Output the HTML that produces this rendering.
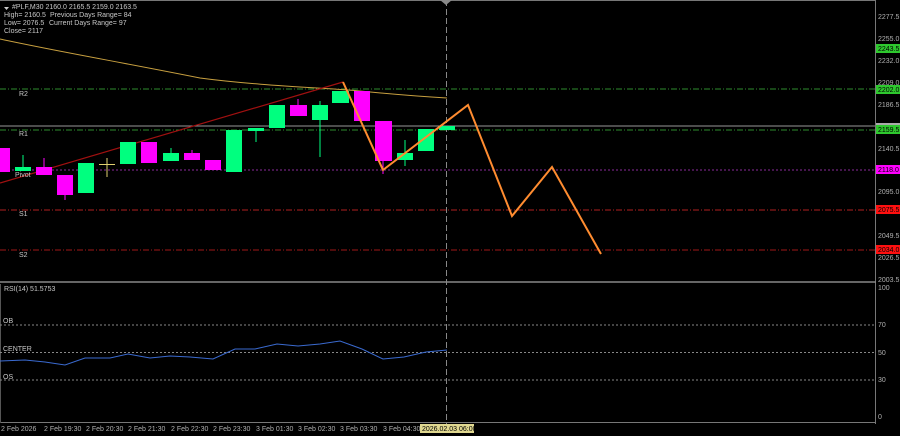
<!DOCTYPE html>
<html><head><style>
body{margin:0;background:#000;width:900px;height:436px;overflow:hidden}
svg{display:block}
text{font-family:"Liberation Sans",sans-serif;font-size:7px;fill:#c8c8c8}
.ax{fill:#b0b0b0}
</style></head><body>
<svg width="900" height="436" viewBox="0 0 900 436">
<rect width="900" height="436" fill="#000"/>
<line x1="0" y1="0.5" x2="876" y2="0.5" stroke="#777"/>
<line x1="875.5" y1="0" x2="875.5" y2="424" stroke="#777"/>
<line x1="0" y1="282" x2="876" y2="282" stroke="#888" stroke-width="1.5"/>
<line x1="0" y1="422.5" x2="876" y2="422.5" stroke="#777"/>
<line x1="0.5" y1="284" x2="0.5" y2="423" stroke="#555"/>
<line x1="0" y1="89" x2="875" y2="89" stroke="#2e8b2e" stroke-dasharray="6,2,1,2"/>
<line x1="0" y1="126" x2="875" y2="126" stroke="#999"/>
<line x1="0" y1="130" x2="875" y2="130" stroke="#2e8b2e" stroke-dasharray="6,2,1,2"/>
<line x1="0" y1="170" x2="875" y2="170" stroke="#8a2a9a" stroke-dasharray="2,2"/>
<line x1="0" y1="210" x2="875" y2="210" stroke="#b02020" stroke-dasharray="6,2,1,2"/>
<line x1="0" y1="250" x2="875" y2="250" stroke="#a01818" stroke-dasharray="6,2,1,2"/>
<line x1="446.5" y1="0" x2="446.5" y2="424" stroke="#888" stroke-dasharray="6,3"/>
<path d="M0,39 C60,52 120,62 200,78 C260,86 330,88 360,91 C400,95 430,97 447,98" stroke="#c8a040" fill="none"/>
<line x1="0" y1="183" x2="343" y2="82" stroke="#a01010" stroke-width="1.2"/>
<g stroke-width="1">
<rect x="0" y="148" width="10" height="24" fill="#ff00ff"/>
<line x1="23" y1="155" x2="23" y2="171" stroke="#00ff7f"/><rect x="15" y="167" width="16" height="4" fill="#00ff7f"/>
<line x1="44" y1="158" x2="44" y2="175" stroke="#ff00ff"/><rect x="36" y="167" width="16" height="8" fill="#ff00ff"/>
<line x1="65" y1="175" x2="65" y2="200" stroke="#ff00ff"/><rect x="57" y="175" width="16" height="20" fill="#ff00ff"/>
<rect x="78" y="163" width="16" height="30" fill="#00ff7f"/>
<line x1="99" y1="164.5" x2="115" y2="164.5" stroke="#e0d070"/><line x1="107" y1="158" x2="107" y2="177" stroke="#e0d070"/>
<rect x="120" y="142" width="16" height="22" fill="#00ff7f"/>
<rect x="141" y="142" width="16" height="21" fill="#ff00ff"/>
<line x1="171" y1="148" x2="171" y2="161" stroke="#00ff7f"/><rect x="163" y="153" width="16" height="8" fill="#00ff7f"/>
<line x1="192" y1="150" x2="192" y2="160" stroke="#ff00ff"/><rect x="184" y="153" width="16" height="7" fill="#ff00ff"/>
<rect x="205" y="160" width="16" height="10" fill="#ff00ff"/>
<rect x="226" y="130" width="16" height="42" fill="#00ff7f"/>
<line x1="256" y1="128" x2="256" y2="142" stroke="#00ff7f"/><rect x="248" y="128" width="16" height="3" fill="#00ff7f"/>
<rect x="269" y="105" width="16" height="23" fill="#00ff7f"/>
<line x1="298" y1="99" x2="298" y2="115" stroke="#ff00ff"/><rect x="290" y="105" width="17" height="11" fill="#ff00ff"/>
<line x1="320" y1="101" x2="320" y2="157" stroke="#00ff7f"/><rect x="312" y="105" width="16" height="15" fill="#00ff7f"/>
<rect x="332" y="91" width="17" height="12" fill="#00ff7f"/>
<rect x="354" y="91" width="16" height="30" fill="#ff00ff"/>
<line x1="383" y1="121" x2="383" y2="174" stroke="#ff00ff"/><rect x="375" y="121" width="17" height="40" fill="#ff00ff"/>
<line x1="405" y1="140" x2="405" y2="166" stroke="#00ff7f"/><rect x="397" y="153" width="16" height="7" fill="#00ff7f"/>
<rect x="418" y="129" width="16" height="22" fill="#00ff7f"/>
<rect x="439" y="126" width="16" height="4" fill="#00ff7f"/>
</g>
<polyline points="343,82 383,170 468,105 512,216 552,167 601,254" stroke="#ff8c30" stroke-width="2" fill="none"/>
<path d="M4,7 l5,0 l-2.5,3z" fill="#ccc"/>
<text x="12" y="9">#PLF,M30  2160.0 2165.5 2159.0 2163.5</text>
<text x="4" y="17">High= 2160.5</text><text x="50" y="17">Previous Days Range= 84</text>
<text x="4" y="25">Low= 2076.5</text><text x="49" y="25">Current Days Range= 97</text>
<text x="4" y="33">Close= 2117</text>
<text x="19" y="96">R2</text><text x="19" y="136">R1</text>
<text x="15" y="177">Pivot</text><text x="19" y="216">S1</text><text x="19" y="257">S2</text>
<text class="ax" x="878" y="19">2277.5</text>
<text class="ax" x="878" y="41">2255.0</text>
<text class="ax" x="878" y="63">2232.0</text>
<text class="ax" x="878" y="85">2209.0</text>
<text class="ax" x="878" y="107">2186.5</text>
<text class="ax" x="878" y="151">2140.5</text>
<text class="ax" x="878" y="194">2095.0</text>
<text class="ax" x="878" y="238">2049.5</text>
<text class="ax" x="878" y="260">2026.5</text>
<text class="ax" x="878" y="282">2003.5</text>
<rect x="876" y="44" width="24" height="9" fill="#2ec82e"/><text x="878" y="51" style="fill:#000">2243.5</text>
<rect x="876" y="85" width="24" height="9" fill="#2ec82e"/><text x="878" y="92" style="fill:#000">2202.0</text>
<rect x="876" y="123" width="24" height="4" fill="#aaa"/>
<rect x="876" y="125" width="24" height="9" fill="#2ec82e"/><text x="878" y="132" style="fill:#000">2159.5</text>
<rect x="876" y="165" width="24" height="9" fill="#ff00ff"/><text x="878" y="172" style="fill:#000">2118.0</text>
<rect x="876" y="205" width="24" height="9" fill="#ff1010"/><text x="878" y="212" style="fill:#000">2075.5</text>
<rect x="876" y="245" width="24" height="9" fill="#ff1010"/><text x="878" y="252" style="fill:#000">2034.0</text>
<text x="4" y="291">RSI(14) 51.5753</text>
<line x1="0" y1="325" x2="875" y2="325" stroke="#888" stroke-dasharray="2,2"/>
<line x1="0" y1="352.5" x2="875" y2="352.5" stroke="#888" stroke-dasharray="2,2"/>
<line x1="0" y1="380" x2="875" y2="380" stroke="#888" stroke-dasharray="2,2"/>
<text x="3" y="323">OB</text><text x="3" y="351">CENTER</text><text x="3" y="379">OS</text>
<text class="ax" x="878" y="290">100</text><text class="ax" x="878" y="327">70</text><text class="ax" x="878" y="355">50</text><text class="ax" x="878" y="382">30</text><text class="ax" x="878" y="419">0</text>
<polyline points="0,361 25,360 45,362 65,365 85,358 110,358 128,354 150,358 170,356 190,357 213,359 235,349 255,349 277,344 298,346 320,344 340,341 362,349 383,359 404,357 426,352 447,350" stroke="#3a6ad0" fill="none"/>
<text class="ax" x="1" y="431">2 Feb 2026</text>
<text class="ax" x="44" y="431">2 Feb 19:30</text>
<text class="ax" x="86" y="431">2 Feb 20:30</text>
<text class="ax" x="128" y="431">2 Feb 21:30</text>
<text class="ax" x="171" y="431">2 Feb 22:30</text>
<text class="ax" x="213" y="431">2 Feb 23:30</text>
<text class="ax" x="256" y="431">3 Feb 01:30</text>
<text class="ax" x="298" y="431">3 Feb 02:30</text>
<text class="ax" x="340" y="431">3 Feb 03:30</text>
<text class="ax" x="383" y="431">3 Feb 04:30</text>
<rect x="420" y="424" width="54" height="9" fill="#e0d890"/><text x="422" y="431" style="fill:#000">2026.02.03 06:00</text>
<path d="M440,0 l6,5 l6,-5z" fill="#888"/>
</svg>
</body></html>
